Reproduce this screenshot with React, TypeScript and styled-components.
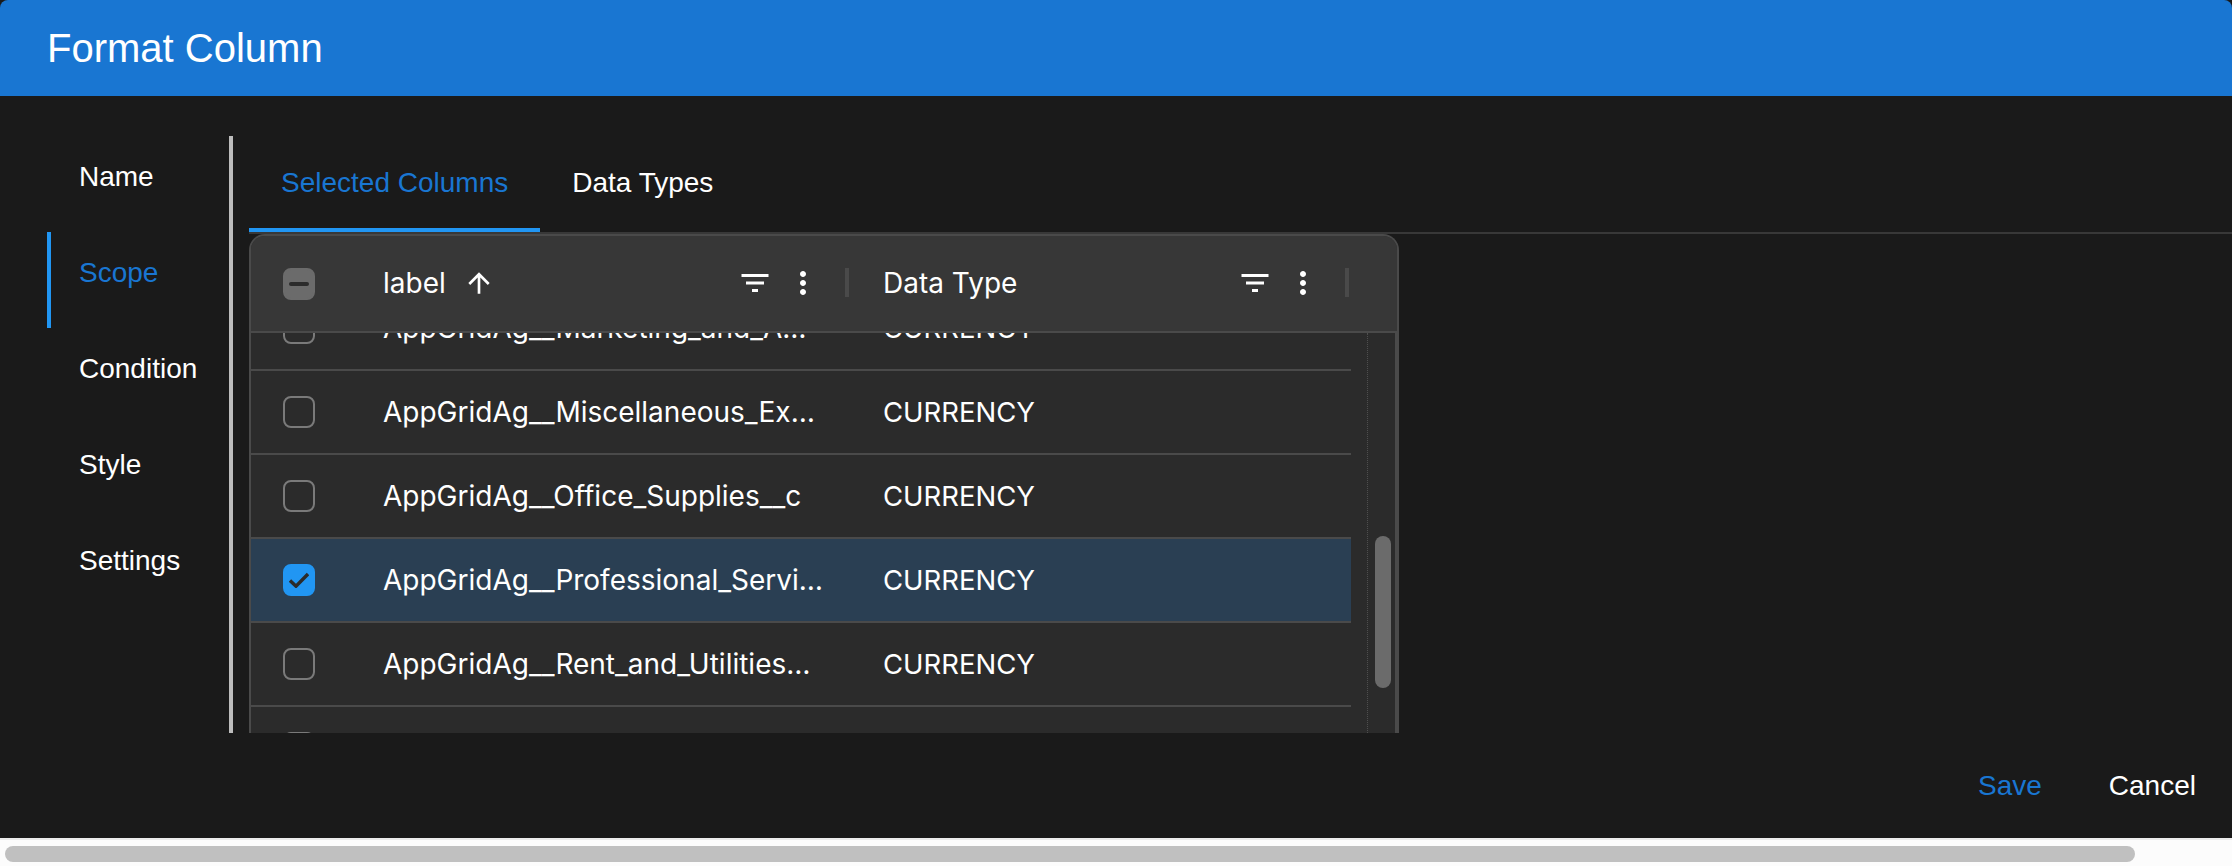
import React from "react";
import styled, { createGlobalStyle } from "styled-components";

const Global = createGlobalStyle`
  html, body { margin: 0; padding: 0; background: #fff; overflow: hidden; }
  * { box-sizing: border-box; }
`;

const Page = styled.div`
  width: 2232px;
  height: 866px;
  display: flex;
  flex-direction: column;
  font-family: "Liberation Sans", Arial, sans-serif;
  background: #fff;
`;

const Dialog = styled.div`
  height: 838px;
  display: flex;
  flex-direction: column;
  background: #1a1a1a;
`;

const TitleBar = styled.header`
  height: 96px;
  flex: none;
  display: flex;
  align-items: center;
  padding-left: 47px;
  background: #1976d2;
  border-radius: 8px 8px 0 0;
  color: #fff;
  font-size: 40px;
`;

const Body = styled.div`
  height: 637px;
  flex: none;
  display: flex;
  padding-top: 40px;
  overflow: hidden;
`;

const Sidebar = styled.nav`
  width: 233px;
  flex: none;
  padding-left: 47px;
  border-right: 4px solid #bdbdbd;
`;

const SideItem = styled.div<{ $active?: boolean }>`
  height: 96px;
  display: flex;
  align-items: center;
  padding: 0 0 15px 28px;
  border-left: 4px solid ${(p) => (p.$active ? "#2196f3" : "transparent")};
  color: ${(p) => (p.$active ? "#1976d2" : "#fff")};
  font-size: 28px;
`;

const Main = styled.main`
  flex: 1;
  min-width: 0;
  display: flex;
  flex-direction: column;
  padding-left: 16px;
`;

const Tabs = styled.div`
  height: 98px;
  flex: none;
  display: flex;
  border-bottom: 2px solid #383838;
`;

const Tab = styled.div<{ $active?: boolean }>`
  height: 96px;
  display: flex;
  align-items: center;
  padding: 2px 32px 0;
  border-bottom: 4px solid ${(p) => (p.$active ? "#2196f3" : "transparent")};
  color: ${(p) => (p.$active ? "#1976d2" : "#fff")};
  font-size: 28px;
`;

const GridFrame = styled.section`
  width: 1150px;
  flex: 1;
  min-height: 0;
  display: flex;
  flex-direction: column;
  border: 2px solid #4a4a4a;
  border-bottom: 0;
  border-radius: 16px 16px 0 0;
  background: #2b2b2b;
  overflow: hidden;
  font-family: Inter, "Liberation Sans", sans-serif;
  color: #fff;
  font-size: 28px;
`;

const HeaderRow = styled.div`
  height: 97px;
  flex: none;
  display: flex;
  align-items: center;
  background: #373737;
  border-bottom: 2px solid #4a4a4a;
`;

const CheckCell = styled.div`
  width: 101px;
  flex: none;
  padding-left: 32px;
  display: flex;
  align-items: center;
`;

const HeaderCell = styled.div`
  width: 500px;
  flex: none;
  display: flex;
  align-items: center;
  padding-left: 31px;
  height: 100%;
  padding-bottom: 2px;
`;

const HeaderLabel = styled.span`
  line-height: 32px;
`;

const SortIcon = styled.svg`
  width: 32px;
  height: 32px;
  margin-left: 17px;
  margin-right: 0;
  fill: #fff;
`;

const Spacer = styled.div`
  flex: 1;
`;

const IconBox = styled.svg`
  width: 36px;
  height: 36px;
  flex: none;
  fill: #fff;
`;

const MenuIcon = styled(IconBox)`
  margin-left: 12px;
`;

const Separator = styled.div`
  width: 4px;
  height: 29px;
  margin: 0 3px 0 24px;
  flex: none;
  background: #4a4a4a;
`;

const Scroller = styled.div`
  flex: 1;
  min-height: 0;
  display: flex;
`;

const Viewport = styled.div`
  width: 1100px;
  flex: none;
  overflow: hidden;
`;

const Rows = styled.div`
  margin-top: -46px;
`;

const Row = styled.div<{ $selected?: boolean }>`
  height: 84px;
  display: flex;
  align-items: center;
  border-bottom: 2px solid #4a4a4a;
  background: ${(p) => (p.$selected ? "#2a3f53" : "#2b2b2b")};
`;

const LabelCell = styled.div`
  width: 500px;
  flex: none;
  padding: 0 28.5px 0 31px;
  white-space: nowrap;
  overflow: hidden;
  text-overflow: ellipsis;
`;

const TypeCell = styled(LabelCell)`
  font-size: 27.5px;
`;

const Filler = styled.div`
  width: 16px;
  flex: none;
`;

const ScrollTrack = styled.div`
  width: 30px;
  flex: none;
  padding: 203px 4px 0 7px;
  border-left: 1px dotted #4f4f4f;
  border-right: 2px solid #4a4a4a;
`;

const ScrollThumb = styled.div`
  width: 16px;
  height: 152px;
  border-radius: 8px;
  background: #6b6b6b;
`;

const Footer = styled.footer`
  flex: 1;
  display: flex;
  align-items: center;
  justify-content: flex-end;
  padding-right: 36px;
  gap: 67px;
  font-size: 28px;
`;

const FooterButton = styled.span<{ $primary?: boolean }>`
  color: ${(p) => (p.$primary ? "#1976d2" : "#fff")};
`;

const CheckBox = styled.div<{ $state?: "checked" | "mixed" }>`
  width: 32px;
  height: 32px;
  border-radius: 8px;
  display: flex;
  align-items: center;
  justify-content: center;
  border: 2px solid
    ${(p) => (p.$state === "checked" ? "#2196f3" : p.$state === "mixed" ? "#6b6b6b" : "#7a7a7a")};
  background: ${(p) => (p.$state === "checked" ? "#2196f3" : p.$state === "mixed" ? "#6b6b6b" : "transparent")};
`;

const Dash = styled.div`
  width: 20px;
  height: 4px;
  border-radius: 2px;
  background: #2b2b2b;
`;

const Tick = styled.svg`
  width: 20px;
  height: 16px;
  flex: none;
  fill: none;
  stroke: #2b2b2b;
  stroke-width: 3.4;
`;

const PageScroll = styled.div`
  flex: 1;
  padding: 6px 0 0 5px;
  border-top: 2px solid #ececec;
  background: #fcfcfc;
`;

const PageThumb = styled.div`
  width: 2130px;
  height: 16px;
  border-radius: 8px;
  background: #c0c0c0;
`;

const FILTER = "M10 18h4v-2h-4v2zM3 6v2h18V6H3zm3 7h12v-2H6v2z";
const MORE =
  "M12 8c1.1 0 2-.9 2-2s-.9-2-2-2-2 .9-2 2 .9 2 2 2zm0 2c-1.1 0-2 .9-2 2s.9 2 2 2 2-.9 2-2-.9-2-2-2zm0 6c-1.1 0-2 .9-2 2s.9 2 2 2 2-.9 2-2-.9-2-2-2z";

const HeaderActions = () => (
  <>
    <Spacer />
    <IconBox viewBox="0 0 24 24">
      <path d={FILTER} />
    </IconBox>
    <MenuIcon viewBox="0 0 24 24">
      <path d={MORE} />
    </MenuIcon>
    <Separator />
  </>
);

const rows = [
  { label: "AppGridAg__Marketing_and_Advertising__c" },
  { label: "AppGridAg__Miscellaneous_Expense__c" },
  { label: "AppGridAg__Office_Supplies__c" },
  { label: "AppGridAg__Professional_Services__c", selected: true },
  { label: "AppGridAg__Rent_and_Utilities_Expense__c" },
  { label: "AppGridAg__Salaries_and_Wages__c" },
];

export default function App() {
  return (
    <Page>
      <Global />
      <Dialog>
        <TitleBar>Format Column</TitleBar>
        <Body>
          <Sidebar>
            <SideItem>Name</SideItem>
            <SideItem $active>Scope</SideItem>
            <SideItem>Condition</SideItem>
            <SideItem>Style</SideItem>
            <SideItem>Settings</SideItem>
          </Sidebar>
          <Main>
            <Tabs>
              <Tab $active>Selected Columns</Tab>
              <Tab>Data Types</Tab>
            </Tabs>
            <GridFrame>
              <HeaderRow>
                <CheckCell>
                  <CheckBox $state="mixed">
                    <Dash />
                  </CheckBox>
                </CheckCell>
                <HeaderCell>
                  <HeaderLabel>label</HeaderLabel>
                  <SortIcon viewBox="0 0 24 24">
                    <path d="M4 12l1.41 1.41L11 7.83V20h2V7.83l5.58 5.59L20 12l-8-8-8 8z" />
                  </SortIcon>
                  <HeaderActions />
                </HeaderCell>
                <HeaderCell>
                  <HeaderLabel>Data Type</HeaderLabel>
                  <HeaderActions />
                </HeaderCell>
              </HeaderRow>
              <Scroller>
                <Viewport>
                  <Rows>
                    {rows.map((r) => (
                      <Row key={r.label} $selected={r.selected}>
                        <CheckCell>
                          <CheckBox $state={r.selected ? "checked" : undefined}>
                            {r.selected && (
                              <Tick viewBox="0 0 20 16">
                                <path d="M1 8.5L7 14.2L19 2" />
                              </Tick>
                            )}
                          </CheckBox>
                        </CheckCell>
                        <LabelCell>{r.label}</LabelCell>
                        <TypeCell>CURRENCY</TypeCell>
                      </Row>
                    ))}
                  </Rows>
                </Viewport>
                <Filler />
                <ScrollTrack>
                  <ScrollThumb />
                </ScrollTrack>
              </Scroller>
            </GridFrame>
          </Main>
        </Body>
        <Footer>
          <FooterButton $primary>Save</FooterButton>
          <FooterButton>Cancel</FooterButton>
        </Footer>
      </Dialog>
      <PageScroll>
        <PageThumb />
      </PageScroll>
    </Page>
  );
}
